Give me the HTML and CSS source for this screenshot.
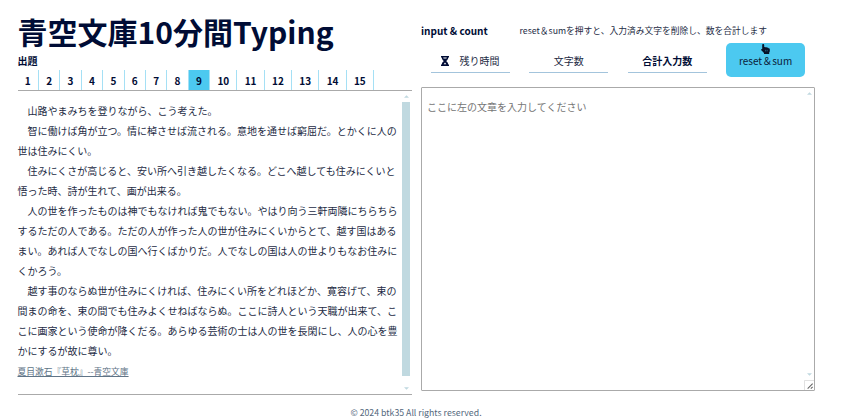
FILE: index.html
```html
<!DOCTYPE html>
<html lang="ja">
<head>
<meta charset="utf-8">
<title>青空文庫10分間Typing</title>
<link rel="stylesheet" href="styles.css">
</head>
<body>
<main class="page">
  <section class="source">
    <h1 class="title">青空文庫10分間Typing</h1>
    <h2 class="label">出題</h2>
    <nav class="tabs">
      <a class="tab">1</a><a class="tab">2</a><a class="tab">3</a><a class="tab">4</a><a class="tab">5</a><a class="tab">6</a><a class="tab">7</a><a class="tab">8</a><a class="tab active">9</a><a class="tab">10</a><a class="tab">11</a><a class="tab">12</a><a class="tab">13</a><a class="tab">14</a><a class="tab">15</a>
    </nav>
    <div class="reader">
      <div class="passage">
        <p>　山路やまみちを登りながら、こう考えた。</p>
        <p>　智に働けば角が立つ。情に棹させば流される。意地を通せば窮屈だ。とかくに人の<br>世は住みにくい。</p>
        <p>　住みにくさが高じると、安い所へ引き越したくなる。どこへ越しても住みにくいと<br>悟った時、詩が生れて、画が出来る。</p>
        <p>　人の世を作ったものは神でもなければ鬼でもない。やはり向う三軒両隣にちらちら<br>するただの人である。ただの人が作った人の世が住みにくいからとて、越す国はある<br>まい。あれば人でなしの国へ行くばかりだ。人でなしの国は人の世よりもなお住みに<br>くかろう。</p>
        <p>　越す事のならぬ世が住みにくければ、住みにくい所をどれほどか、寛容げて、束の<br>間まの命を、束の間でも住みよくせねばならぬ。ここに詩人という天職が出来て、こ<br>こに画家という使命が降くだる。あらゆる芸術の士は人の世を長閑にし、人の心を豊<br>かにするが故に尊い。</p>
        <p class="credit"><a>夏目漱石『草枕』--青空文庫</a></p>
      </div>
      <div class="scrollbar">
        <svg class="arrow" viewBox="0 0 6 3"><path d="M0 3L3 0L6 3Z"/></svg>
        <div class="thumb"></div>
        <svg class="arrow" viewBox="0 0 6 3"><path d="M0 0L3 3L6 0Z"/></svg>
      </div>
    </div>
  </section>
  <section class="entry">
    <div class="heading">
      <h2 class="label">input &amp; count</h2>
      <p class="hint">reset＆sumを押すと、入力済み文字を削除し、数を合計します</p>
    </div>
    <div class="counters">
      <div class="counter">
        <svg class="hourglass" viewBox="0 0 8 10"><path d="M0 0H8V1.4H7.2C7.2 3 6.3 4.2 5.1 5C6.3 5.8 7.2 7 7.2 8.6H8V10H0V8.6H.8C.8 7 1.7 5.8 2.9 5C1.7 4.2.8 3 .8 1.4H0Z"/><path class="sand" d="M2.2 1.6H5.8L5.4 2.5H2.6ZM4 6.4L5.3 8.2H2.7Z"/></svg>
        残り時間
      </div>
      <div class="counter">文字数</div>
      <div class="counter total">合計入力数</div>
      <button class="reset">
        <svg class="pointer" viewBox="0 0 9 10"><path d="M2.1 0C2.8 0 3.2.5 3.2 1.1V3.2C3.7 2.9 4.3 3 4.6 3.4C5.1 3.1 5.8 3.2 6.1 3.7C6.7 3.5 7.3 3.7 7.5 4.2C8.2 4.1 8.8 4.6 8.8 5.3V7C8.8 7.8 8.3 8.2 8.2 8.7V10H3V9L.3 6.3C-.3 5.5.5 4.6 1.2 5V1.1C1.2.5 1.5 0 2.1 0Z"/><path class="gap" d="M4.6 5.8V7.4M6.2 5.8V7.4"/></svg>
        reset＆sum
      </button>
    </div>
    <div class="field">
      <textarea class="input" placeholder="ここに左の文章を入力してください"></textarea>
      <svg class="arrow up" viewBox="0 0 6 3"><path d="M0 3L3 0L6 3Z"/></svg>
      <svg class="arrow down" viewBox="0 0 6 3"><path d="M0 0L3 3L6 0Z"/></svg>
      <svg class="grip" viewBox="0 0 11 11"><path class="edge" d="M.5 11V.5H11"/><path class="lines" d="M4 9.5L9.5 4M7.5 9.5L9.5 7.5"/></svg>
    </div>
  </section>
</main>
<footer class="footer">© 2024 btk35 All rights reserved.</footer>
</body>
</html>
```

FILE: styles.css
```css
* {
  box-sizing: border-box;
}

body {
  margin: 0;
  height: 419px;
  overflow: hidden;
  background: #fff;
  color: #1d2b44;
  font: 10px/20px "Noto Sans CJK JP", sans-serif;
}

h1, h2, p {
  margin: 0;
}

.page {
  display: grid;
  grid-template-columns: 394px 394px;
  column-gap: 9.5px;
  padding: 12px 0 0 17.5px;
  height: 395px;
}

.title {
  height: 40px;
  color: #000c35;
  font-size: 30px;
  font-weight: 700;
  line-height: 38px;
  white-space: nowrap;
}

.label {
  color: #000c35;
  font-size: 10px;
  font-weight: 700;
  line-height: 18px;
}

.tabs {
  display: flex;
  height: 21px;
  border-bottom: 1px solid #aaa;
}

.tab {
  padding: 0 7.25px;
  border-right: 1px solid #a5e0f5;
  color: #000c35;
  font-weight: 700;
  line-height: 21px;
}

.active {
  background: #4cc9f0;
}

.reader {
  display: flex;
  justify-content: space-between;
  height: 304px;
  border-bottom: 1px solid #aaa;
}

.passage {
  padding-top: 10px;
  white-space: nowrap;
}

.credit {
  padding-top: 1px;
  color: #607487;
  font-size: 8.75px;
  text-decoration: underline;
}

.scrollbar {
  display: flex;
  flex-direction: column;
  align-items: center;
  justify-content: space-between;
  width: 8px;
  margin-right: 1.5px;
  padding: 4px 0 4px;
}

.thumb {
  width: 8px;
  height: 274px;
  margin: 0 0 8px;
  background: #c0d9e0;
}

.arrow {
  width: 5px;
  height: 3px;
  fill: #c0d9e0;
}

.heading {
  display: flex;
  padding-top: 10px;
}

.heading .label {
  width: 98.5px;
}

.hint {
  font-size: 8.75px;
  line-height: 18px;
  white-space: nowrap;
}

.counters {
  display: flex;
  gap: 19.5px;
  height: 47px;
  padding: 3px 10px 0;
}

.counter {
  display: flex;
  align-items: center;
  justify-content: center;
  width: 79px;
  height: 30px;
  padding-top: 6px;
  border-bottom: 1px solid #a3c4dc;
}

.total {
  color: #000c35;
  font-weight: 700;
}

.hourglass {
  width: 8px;
  height: 10px;
  margin-right: 10px;
  fill: #000c35;
}

.sand {
  fill: #fff;
}

.reset {
  display: flex;
  flex-direction: column;
  align-items: center;
  width: 79px;
  height: 34px;
  padding: 1px 0 0;
  border: 0;
  border-radius: 5px;
  background: #4cc9f0;
  color: #0b1c3b;
  font: inherit;
  line-height: 14px;
}

.pointer {
  width: 9px;
  height: 10px;
  fill: #071329;
}

.gap {
  fill: none;
  stroke: #4cc9f0;
  stroke-width: .4;
}

.field {
  position: relative;
  height: 304px;
}

.input {
  display: block;
  width: 394px;
  height: 304px;
  padding: 9px 5px;
  border: 1px solid #aaa;
  border-radius: 1px;
  outline: 0;
  resize: none;
  overflow: hidden;
  background: #fff;
  color: #1d2b44;
  font: inherit;
}

.input::placeholder {
  color: #757575;
}

.up, .down {
  position: absolute;
  right: 3px;
}

.up {
  top: 5px;
}

.down {
  bottom: 15px;
}

.grip {
  position: absolute;
  right: 1px;
  bottom: 1px;
  width: 10px;
  height: 10px;
  fill: none;
}

.edge {
  stroke: #ddd;
}

.lines {
  stroke: #666;
  stroke-width: 1.2;
}

.footer {
  padding-top: 8px;
  padding-right: 9px;
  color: #53677c;
  font-size: 8.75px;
  text-align: center;
}
```
